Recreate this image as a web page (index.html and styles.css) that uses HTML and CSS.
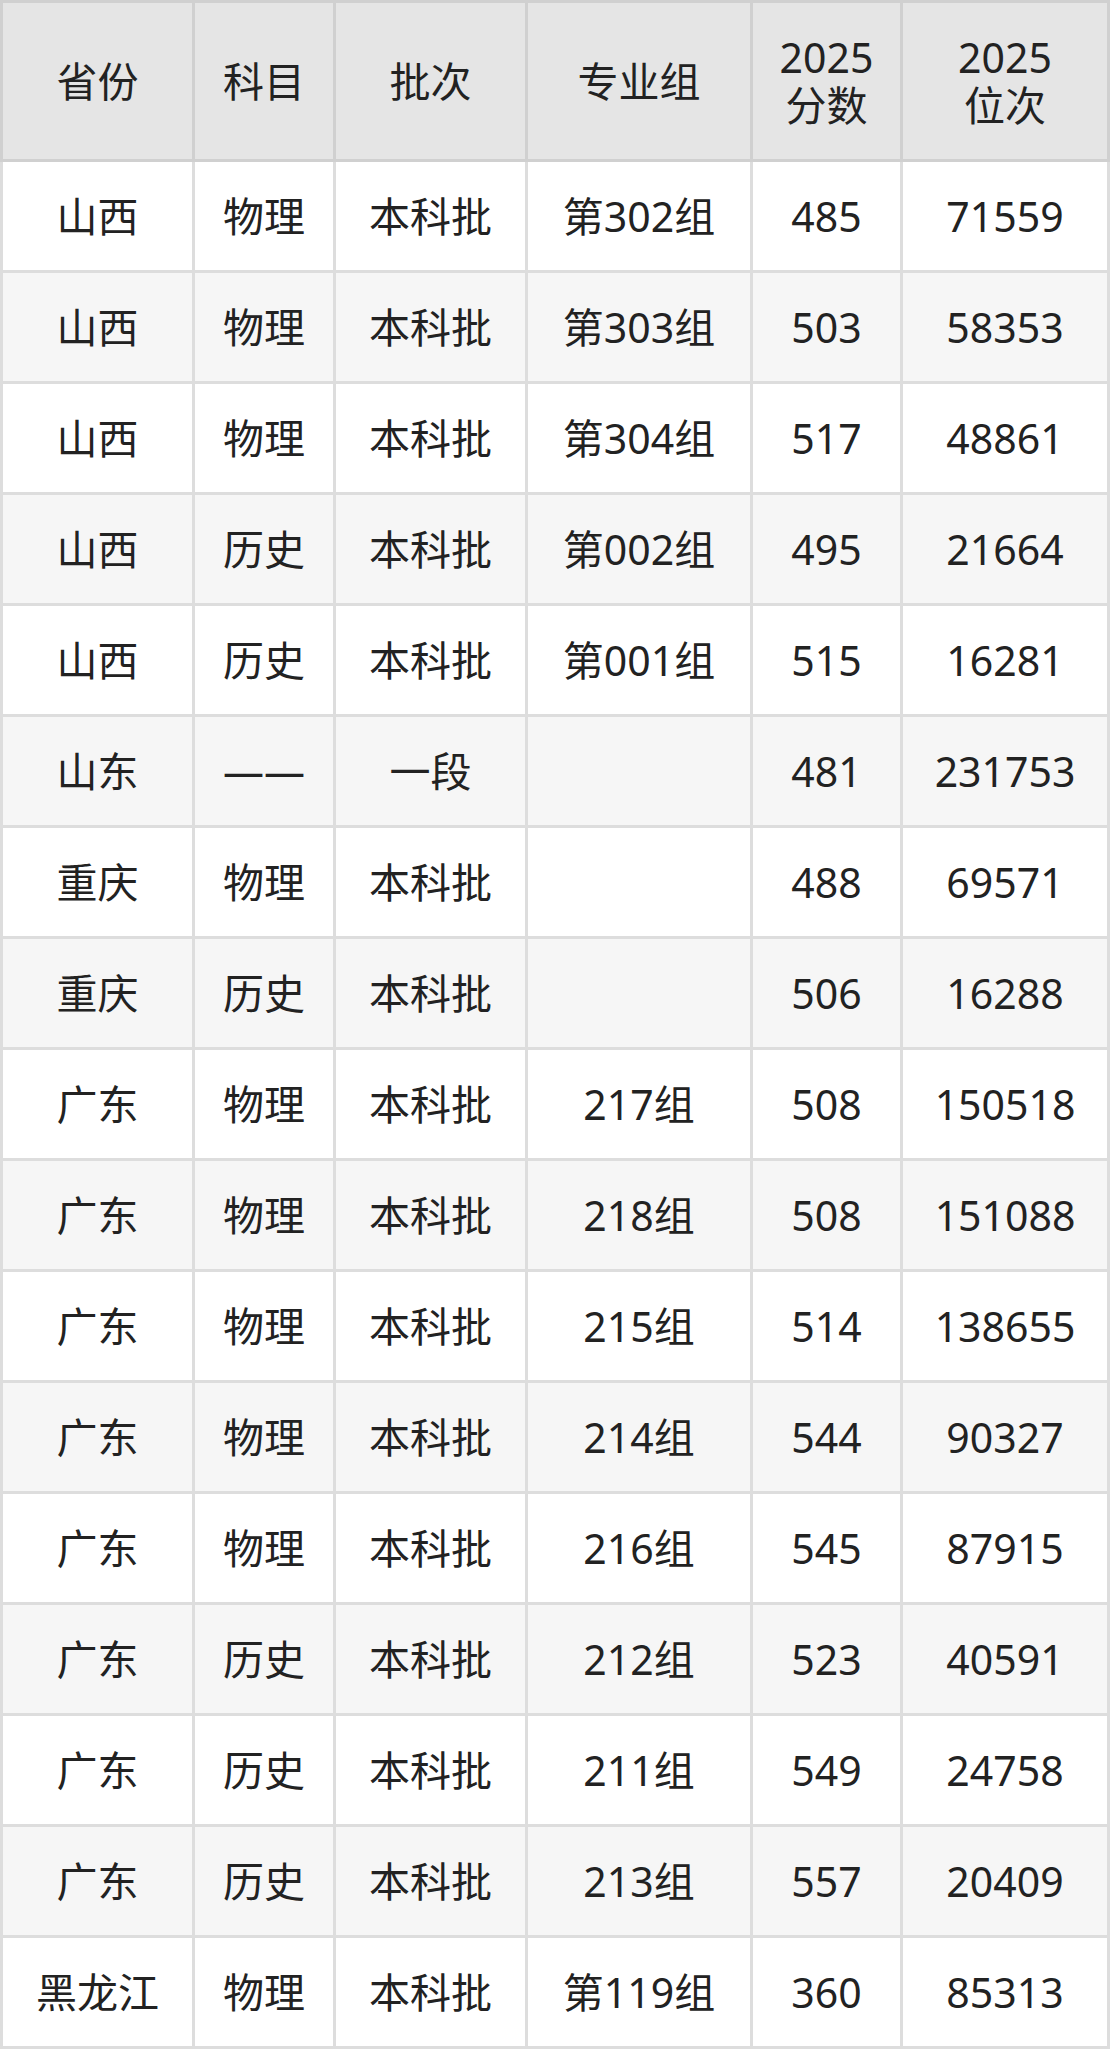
FILE: index.html
```html
<!DOCTYPE html>
<html lang="zh-CN">
<head>
<meta charset="utf-8">
<title>分数位次</title>
<link rel="stylesheet" href="styles.css">
</head>
<body>
<table class="score-table">
  <colgroup>
    <col class="c1"><col class="c2"><col class="c3"><col class="c4"><col class="c5"><col class="c6">
  </colgroup>
  <thead>
    <tr>
      <th>省份</th><th>科目</th><th>批次</th><th>专业组</th><th>2025<br>分数</th><th>2025<br>位次</th>
    </tr>
  </thead>
  <tbody>
    <tr><td>山西</td><td>物理</td><td>本科批</td><td>第302组</td><td>485</td><td>71559</td></tr>
    <tr><td>山西</td><td>物理</td><td>本科批</td><td>第303组</td><td>503</td><td>58353</td></tr>
    <tr><td>山西</td><td>物理</td><td>本科批</td><td>第304组</td><td>517</td><td>48861</td></tr>
    <tr><td>山西</td><td>历史</td><td>本科批</td><td>第002组</td><td>495</td><td>21664</td></tr>
    <tr><td>山西</td><td>历史</td><td>本科批</td><td>第001组</td><td>515</td><td>16281</td></tr>
    <tr><td>山东</td><td>——</td><td>一段</td><td></td><td>481</td><td>231753</td></tr>
    <tr><td>重庆</td><td>物理</td><td>本科批</td><td></td><td>488</td><td>69571</td></tr>
    <tr><td>重庆</td><td>历史</td><td>本科批</td><td></td><td>506</td><td>16288</td></tr>
    <tr><td>广东</td><td>物理</td><td>本科批</td><td>217组</td><td>508</td><td>150518</td></tr>
    <tr><td>广东</td><td>物理</td><td>本科批</td><td>218组</td><td>508</td><td>151088</td></tr>
    <tr><td>广东</td><td>物理</td><td>本科批</td><td>215组</td><td>514</td><td>138655</td></tr>
    <tr><td>广东</td><td>物理</td><td>本科批</td><td>214组</td><td>544</td><td>90327</td></tr>
    <tr><td>广东</td><td>物理</td><td>本科批</td><td>216组</td><td>545</td><td>87915</td></tr>
    <tr><td>广东</td><td>历史</td><td>本科批</td><td>212组</td><td>523</td><td>40591</td></tr>
    <tr><td>广东</td><td>历史</td><td>本科批</td><td>211组</td><td>549</td><td>24758</td></tr>
    <tr><td>广东</td><td>历史</td><td>本科批</td><td>213组</td><td>557</td><td>20409</td></tr>
    <tr><td>黑龙江</td><td>物理</td><td>本科批</td><td>第119组</td><td>360</td><td>85313</td></tr>
  </tbody>
</table>
</body>
</html>
```
FILE: styles.css
```css
html, body {
  margin: 0;
  padding: 0;
  background: #ffffff;
}

.score-table {
  width: 1110px;
  table-layout: fixed;
  border-collapse: collapse;
  font-family: "Noto Sans", "Noto Sans CJK SC", sans-serif;
  font-size: 41px;
  color: #222222;
  text-align: center;
}

.c1 { width: 192px; }
.c2 { width: 141px; }
.c3 { width: 192px; }
.c4 { width: 225px; }
.c5 { width: 150px; }
.c6 { width: 207px; }

.score-table th {
  height: 156px;
  padding: 0;
  font-weight: normal;
  line-height: 48px;
  background: #e5e5e5;
  border: 3px solid #d0d0d0;
}

.score-table td {
  height: 108px;
  padding: 0;
  line-height: 48px;
  border: 3px solid #dddddd;
}

.score-table tbody tr:nth-child(even) td {
  background: #f6f6f6;
}
```
